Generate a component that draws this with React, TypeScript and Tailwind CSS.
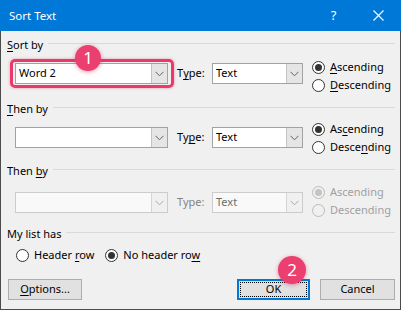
import type { ReactNode } from 'react';

function Key({ children }: { children: ReactNode }) {
  return <span className="underline decoration-1 underline-offset-[2px]">{children}</span>;
}

function Chevron({ disabled }: { disabled?: boolean }) {
  return (
    <svg width="9" height="6" viewBox="0 0 9 6" fill="none">
      <path d="M0.5 0.8 L4.5 4.8 L8.5 0.8" stroke={disabled ? '#a8a8a8' : '#606060'} strokeWidth="1" />
    </svg>
  );
}

function Combo({
  width,
  value,
  disabled,
}: {
  width: string;
  value?: string;
  disabled?: boolean;
}) {
  return (
    <div
      className={`${width} h-[21px] flex border ${
        disabled ? 'border-[#cccccc] bg-[#f9f9f9]' : 'border-[#a2a2a2] bg-white'
      }`}
    >
      <div className={`flex-1 flex items-center pl-[3px] ${disabled ? 'text-[#6d6d6d]' : 'text-black'}`}>
        {value}
      </div>
      <div
        className={`w-[16px] flex items-center justify-center border-l ${
          disabled ? 'bg-[#f0f0f0] border-[#d5d5d5]' : 'bg-[#e5e5e5] border-[#c4c4c4]'
        }`}
      >
        <Chevron disabled={disabled} />
      </div>
    </div>
  );
}

function Radio({
  checked,
  disabled,
  children,
  className = '',
}: {
  checked?: boolean;
  disabled?: boolean;
  children: ReactNode;
  className?: string;
}) {
  return (
    <div className={`flex items-center h-[18px] ${className}`}>
      <span
        className={`w-[13px] h-[13px] rounded-full border flex items-center justify-center ${
          disabled ? 'border-[#bcbcbc] bg-[#f0f0f0]' : 'border-[#333333] bg-white'
        }`}
      >
        {checked && (
          <span className={`w-[7px] h-[7px] rounded-full ${disabled ? 'bg-[#c4c4c4]' : 'bg-[#333333]'}`} />
        )}
      </span>
      <span className={`ml-[5px] ${disabled ? 'text-[#a0a0a0]' : 'text-black'}`}>{children}</span>
    </div>
  );
}

function SectionTitle({ children }: { children: ReactNode }) {
  return (
    <div className="flex items-center h-[16px]">
      <span>{children}</span>
      <div className="flex-1 h-px bg-[#d9d9d9] ml-[5px] -mt-[3px]" />
    </div>
  );
}

function Badge({ label, className }: { label: string; className: string }) {
  return (
    <div
      className={`absolute rounded-full bg-[#ea3f6f] text-white flex items-center justify-center text-[17px] shadow-[0_1px_4px_rgba(200,30,80,0.45)] ${className}`}
    >
      {label}
    </div>
  );
}

export default function App() {
  return (
    <div className="relative w-[401px] h-[310px] flex flex-col bg-[#f0f0f0] text-[11px] text-black font-['Noto_Sans',sans-serif] overflow-hidden">
      {/* title bar */}
      <div className="h-[31px] bg-[#0078d7] flex items-center text-white">
        <span className="pl-[9px] text-[11.5px]">Sort Text</span>
        <div className="ml-auto flex">
          <div className="w-[45px] flex items-center justify-center text-[13px]">?</div>
          <div className="w-[45px] flex items-center justify-center">
            <svg width="11" height="11" viewBox="0 0 11 11">
              <path d="M0.5 0.5 L10.5 10.5 M10.5 0.5 L0.5 10.5" stroke="white" strokeWidth="1.1" />
            </svg>
          </div>
        </div>
      </div>

      <div className="flex-1 flex flex-col border-x border-b border-[#4b4b4b] pl-[6px] pr-[5px] pt-[6px]">
        <SectionTitle>
          <Key>S</Key>ort by
        </SectionTitle>
        <div className="flex items-start mt-[5px]">
          <div className="relative ml-[8px] mt-[5px]">
            <div className="absolute -left-[5px] -top-[4px] -right-[6px] -bottom-[4px] border-[3px] border-[#ea3a6b] rounded-[5px] shadow-[0_0_3px_rgba(234,58,107,0.5)]" />
            <Combo width="w-[153px]" value="Word 2" />
          </div>
          <div className="ml-[9px] w-[35px] h-[21px] mt-[5px] flex items-center">
            T<Key>y</Key>pe:
          </div>
          <div className="mt-[5px]">
            <Combo width="w-[91px]" value="Text" />
          </div>
          <div className="ml-[9px] flex flex-col">
            <Radio checked>
              <Key>A</Key>scending
            </Radio>
            <Radio>
              <Key>D</Key>escending
            </Radio>
          </div>
        </div>

        <div className="mt-[7px]">
          <SectionTitle>
            <Key>T</Key>hen by
          </SectionTitle>
        </div>
        <div className="flex items-start mt-[3px]">
          <div className="ml-[8px] mt-[7px]">
            <Combo width="w-[153px]" />
          </div>
          <div className="ml-[9px] w-[35px] h-[21px] mt-[7px] flex items-center">
            Ty<Key>p</Key>e:
          </div>
          <div className="mt-[7px]">
            <Combo width="w-[91px]" value="Text" />
          </div>
          <div className="ml-[9px] flex flex-col">
            <Radio checked>
              As<Key>c</Key>ending
            </Radio>
            <Radio>
              Desce<Key>n</Key>ding
            </Radio>
          </div>
        </div>

        <div className="mt-[7px]">
          <SectionTitle>
            Then <Key>b</Key>y
          </SectionTitle>
        </div>
        <div className="flex items-start mt-[4px]">
          <div className="ml-[8px] mt-[9px]">
            <Combo width="w-[153px]" disabled />
          </div>
          <div className="ml-[9px] w-[35px] h-[21px] mt-[9px] flex items-center text-[#838383]">Type:</div>
          <div className="mt-[9px]">
            <Combo width="w-[91px]" value="Text" disabled />
          </div>
          <div className="ml-[9px] flex flex-col">
            <Radio checked disabled>
              Ascending
            </Radio>
            <Radio disabled>Descending</Radio>
          </div>
        </div>

        <div className="mt-[7px]">
          <SectionTitle>My list has</SectionTitle>
        </div>
        <div className="flex mt-[4px] ml-[9px]">
          <Radio>
            Header <Key>r</Key>ow
          </Radio>
          <Radio checked className="ml-[11px]">
            No header ro<Key>w</Key>
          </Radio>
        </div>

        <div className="flex mt-[15px]">
          <button className="ml-[1px] w-[74px] h-[21px] bg-[#e1e1e1] border border-[#adadad] flex items-center justify-center">
            <Key>O</Key>ptions...
          </button>
          <button className="ml-auto w-[73px] h-[21px] bg-[#e1e1e1] border-2 border-[#0078d7] p-px">
            <div className="w-full h-full border border-dotted border-black flex items-center justify-center">OK</div>
          </button>
          <button className="ml-[10px] w-[75px] h-[21px] bg-[#e1e1e1] border border-[#adadad] flex items-center justify-center">
            Cancel
          </button>
        </div>
      </div>

      <Badge label="1" className="left-[75px] top-[45px] w-[26px] h-[26px]" />
      <Badge label="2" className="left-[278px] top-[256px] w-[28px] h-[28px]" />
    </div>
  );
}
